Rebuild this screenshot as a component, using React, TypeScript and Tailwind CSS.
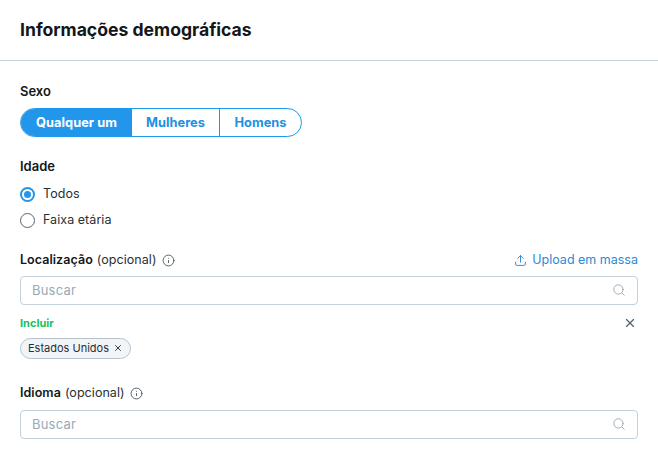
import { Info, Search, Upload, X } from "lucide-react";

function SearchBox() {
  return (
    <div className="flex items-center justify-between h-[29px] border border-[#c4d0da] rounded-[4px] pl-[11px] pr-[11px]">
      <span className="text-[13px] text-[#9aa9b5] tracking-[0.2px]">Buscar</span>
      <Search size={14} strokeWidth={1.6} className="text-[#9aa9b5]" />
    </div>
  );
}

function OptionalLabel({ name }: { name: string }) {
  return (
    <div className="flex items-center h-[17px] text-[12.5px] text-[#14171a] tracking-[0.05px]">
      <span className="font-semibold">{name}</span>
      <span className="ml-1 text-[#292f33]">(opcional)</span>
      <Info size={13} strokeWidth={1.5} className="ml-[5px] text-[#38444d]" />
    </div>
  );
}

export default function App() {
  return (
    <div className="w-[658px] h-[458px] bg-white overflow-hidden font-['Inter',sans-serif] antialiased">
      <div className="h-[61px] border-b border-[#c4d3de] pl-5 pt-[19px]">
        <h1 className="text-[17.6px] leading-[22px] font-bold text-[#14171a]">Informações demográficas</h1>
      </div>

      <div className="pl-5 pr-5 pt-[22px]">
        <div className="text-[13px] leading-[16px] font-semibold text-[#14171a]">Sexo</div>
        <div className="flex mt-[9px] w-[282px] h-[29px] text-[12.8px] font-bold tracking-[0.05px] border border-[#1d9bea] rounded-full overflow-hidden">
          <div className="w-[111px] flex items-center justify-center bg-[#2196eb] text-white">Qualquer um</div>
          <div className="w-[88px] flex items-center justify-center border-r border-[#1d9bea] text-[#1d91e3]">Mulheres</div>
          <div className="flex-1 flex items-center justify-center text-[#1d91e3]">Homens</div>
        </div>

        <div className="mt-[21px] text-[13px] leading-[16px] font-semibold text-[#14171a]">Idade</div>
        <div className="flex items-center mt-[12px] h-[16px]">
          <div className="w-[15px] h-[15px] rounded-full border-2 border-[#2196eb] flex items-center justify-center">
            <div className="w-[7px] h-[7px] rounded-full bg-[#2196eb]" />
          </div>
          <span className="ml-2 text-[12.5px] text-[#292f33] tracking-[0.05px]">Todos</span>
        </div>
        <div className="flex items-center mt-[10px] h-[16px]">
          <div className="w-[15px] h-[15px] rounded-full border border-[#57656f]" />
          <span className="ml-2 text-[12.5px] text-[#292f33] tracking-[0.05px]">Faixa etária</span>
        </div>

        <div className="flex items-center justify-between mt-[23px]">
          <OptionalLabel name="Localização" />
          <div className="flex items-center text-[12.5px] text-[#2b8ad6]">
            <Upload size={13} strokeWidth={1.75} className="mr-[5px]" />
            Upload em massa
          </div>
        </div>
        <div className="mt-[6px]">
          <SearchBox />
        </div>
        <div className="flex items-center justify-between mt-[11px] h-[15px]">
          <span className="text-[11px] font-bold text-[#17bf63]">Incluir</span>
          <X size={14} strokeWidth={2} className="text-[#4e5d69] mr-[1px]" />
        </div>
        <div className="mt-[7px] inline-flex items-center h-[21px] pl-[7px] pr-[7px] rounded-full border border-[#b5c2cd] bg-[#f1f5f8] text-[11px] text-[#292f33]">
          Estados Unidos
          <X size={10} strokeWidth={2.25} className="ml-[4px]" />
        </div>

        <div className="mt-[26px]">
          <OptionalLabel name="Idioma" />
        </div>
        <div className="mt-[8px]">
          <SearchBox />
        </div>
      </div>
    </div>
  );
}
